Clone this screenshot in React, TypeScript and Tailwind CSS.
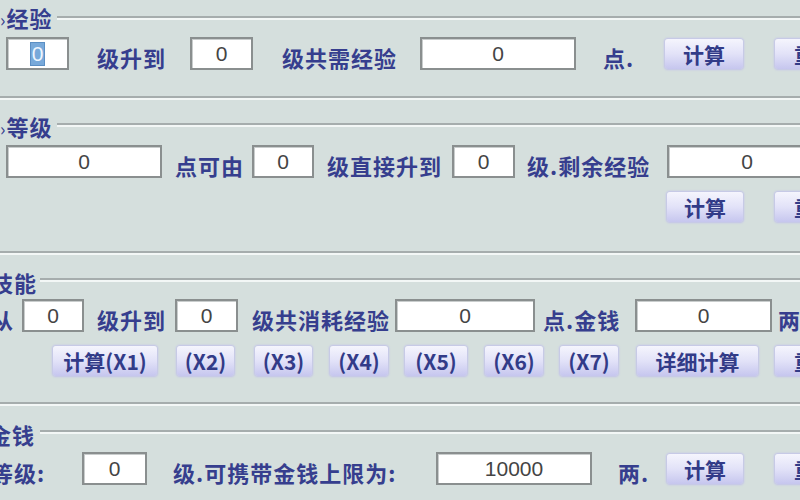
import React from 'react';

const Lbl = ({ children, className = '' }: { children: React.ReactNode; className?: string }) => (
  <span className={`shrink-0 whitespace-nowrap text-[22px] leading-[24px] font-bold tracking-[1px] text-[#363e8e] ${className}`}>
    {children}
  </span>
);

const Inp = ({ children, className = '' }: { children: React.ReactNode; className?: string }) => (
  <div
    className={`shrink-0 h-[33px] border-2 border-[#8a8f8f] bg-white shadow-[inset_1px_1px_0_#c9cdcd] flex items-center justify-center font-['Liberation_Sans',sans-serif] text-[21px] text-[#444444] ${className}`}
  >
    {children}
  </div>
);

const Btn = ({ children, className = '' }: { children: React.ReactNode; className?: string }) => (
  <div
    className={`shrink-0 h-[30px] rounded-[3px] bg-linear-to-b from-[#f5f5fd] via-[#e2e2f8] to-[#c6c6ee] shadow-[0_0_2px_1px_#c2c2ea] flex items-center justify-center whitespace-nowrap text-[21px] leading-[24px] font-bold text-[#323b88] ${className}`}
  >
    {children}
  </div>
);

const Line = () => <div className="h-[4px] border-t-2 border-b-2 border-t-[#a6adad] border-b-[#f3f7f6]" />;

const Header = ({ children, labelClass }: { children: React.ReactNode; labelClass: string }) => (
  <div className="flex items-center h-[20px]">
    <Lbl className={labelClass}>{children}</Lbl>
    <div className="flex-1">
      <Line />
    </div>
  </div>
);

export default function App() {
  return (
    <div className="w-[800px] h-[500px] overflow-hidden bg-[#d5dfdd] pt-[8px] font-['Noto_Sans_CJK_SC','Noto_Sans_CJK_SC',sans-serif]">
      {/* Group 1 */}
      <Header labelClass="w-[57px]">
        <span className="font-normal text-[18px]">›</span>经验
      </Header>
      <div className="flex items-center h-[33px] mt-[9px]">
        <Inp className="ml-[6px] w-[63px]">
          <span className="bg-[#78a9da] text-[#eef6ff] px-[1px] leading-[22px] outline outline-1 outline-[#5b8fc4]">0</span>
        </Inp>
        <Lbl className="ml-[28px] w-[69px] mt-[6px]">级升到</Lbl>
        <Inp className="ml-[24px] w-[63px]">0</Inp>
        <Lbl className="ml-[29px] w-[115px] mt-[6px]">级共需经验</Lbl>
        <Inp className="ml-[23px] w-[156px]">0</Inp>
        <Lbl className="ml-[27px] w-[30px] mt-[6px]">点.</Lbl>
        <Btn className="ml-[32px] w-[78px]">计算</Btn>
        <Btn className="ml-[32px] w-[80px]">重置</Btn>
      </div>
      <div className="mt-[26px]">
        <Line />
      </div>

      {/* Group 2 */}
      <div className="mt-[15px]">
        <Header labelClass="w-[57px] mt-[4px]">
          <span className="font-normal text-[18px]">›</span>等级
        </Header>
      </div>
      <div className="flex items-center h-[33px] mt-[10px]">
        <Inp className="ml-[6px] w-[156px]">0</Inp>
        <Lbl className="ml-[13px] w-[66px] mt-[6px]">点可由</Lbl>
        <Inp className="ml-[11px] w-[62px]">0</Inp>
        <Lbl className="ml-[13px] w-[116px] mt-[6px]">级直接升到</Lbl>
        <Inp className="ml-[9px] w-[63px]">0</Inp>
        <Lbl className="ml-[12px] w-[121px] mt-[6px]">级.剩余经验</Lbl>
        <Inp className="ml-[19px] w-[160px]">0</Inp>
      </div>
      <div className="flex items-center h-[30px] mt-[14px]">
        <Btn className="ml-[667px] w-[76px]">计算</Btn>
        <Btn className="ml-[32px] w-[80px]">重置</Btn>
      </div>
      <div className="mt-[29px]">
        <Line />
      </div>

      {/* Group 3 */}
      <div className="mt-[15px]">
        <Header labelClass="ml-[-9px] w-[49px] mt-[4px]">技能</Header>
      </div>
      <div className="flex items-center h-[33px] mt-[9px]">
        <Lbl className="ml-[-9px] w-[23px] mt-[6px]">从</Lbl>
        <Inp className="ml-[8px] w-[62px]">0</Inp>
        <Lbl className="ml-[13px] w-[69px] mt-[6px]">级升到</Lbl>
        <Inp className="ml-[9px] w-[63px]">0</Inp>
        <Lbl className="ml-[14px] w-[136px] mt-[6px]">级共消耗经验</Lbl>
        <Inp className="ml-[7px] w-[140px]">0</Inp>
        <Lbl className="ml-[8px] w-[75px] mt-[6px]">点.金钱</Lbl>
        <Inp className="ml-[17px] w-[137px]">0</Inp>
        <Lbl className="ml-[6px] mt-[6px]">两.</Lbl>
      </div>
      <div className="flex items-center h-[30px] mt-[14px]">
        <Btn className="ml-[53px] w-[104px]">计算(X1)</Btn>
        <Btn className="ml-[20px] w-[57px]">(X2)</Btn>
        <Btn className="ml-[21px] w-[57px]">(X3)</Btn>
        <Btn className="ml-[18px] w-[58px]">(X4)</Btn>
        <Btn className="ml-[17px] w-[62px]">(X5)</Btn>
        <Btn className="ml-[18px] w-[58px]">(X6)</Btn>
        <Btn className="ml-[17px] w-[58px]">(X7)</Btn>
        <Btn className="ml-[19px] w-[121px]">详细计算</Btn>
        <Btn className="ml-[17px] w-[80px]">重置</Btn>
      </div>
      <div className="mt-[26px]">
        <Line />
      </div>

      {/* Group 4 */}
      <div className="mt-[16px]">
        <Header labelClass="ml-[-11px] w-[51px] mt-[4px]">金钱</Header>
      </div>
      <div className="flex items-center h-[33px] mt-[10px]">
        <Lbl className="ml-[-9px] w-[57px] mt-[6px]">等级:</Lbl>
        <Inp className="ml-[34px] w-[65px]">0</Inp>
        <Lbl className="ml-[26px] w-[224px] mt-[6px]">级.可携带金钱上限为:</Lbl>
        <Inp className="ml-[39px] w-[156px]">10000</Inp>
        <Lbl className="ml-[26px] w-[32px] mt-[6px]">两.</Lbl>
        <Btn className="ml-[17px] w-[76px]">计算</Btn>
        <Btn className="ml-[32px] w-[80px]">重置</Btn>
      </div>
    </div>
  );
}
